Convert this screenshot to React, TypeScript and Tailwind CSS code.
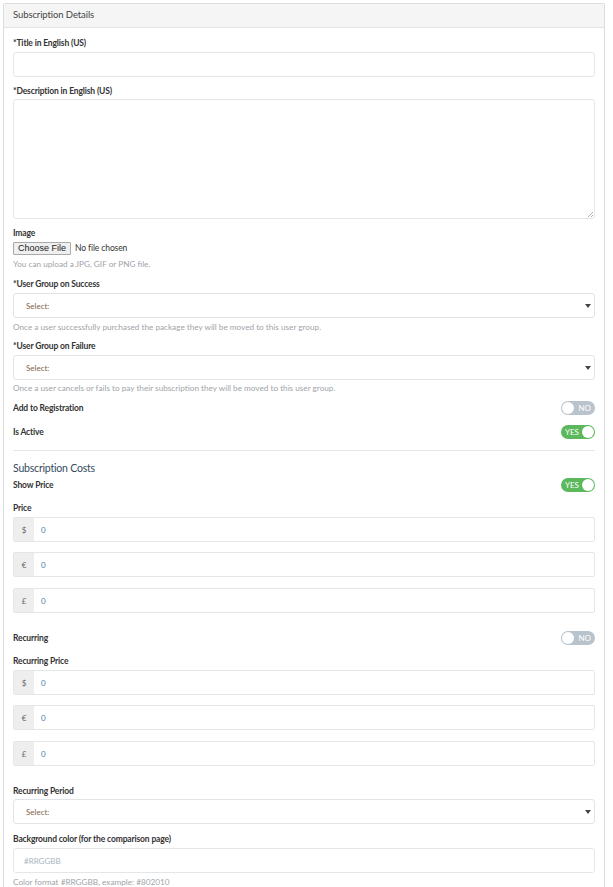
import React from 'react'

const font = { fontFamily: 'Lato, "Open Sans", sans-serif' }

function Label({ children, className = '' }: { children: React.ReactNode; className?: string }) {
  return <div className={`text-[8.5px] font-bold leading-[12px] tracking-[-0.15px] text-[#333] ${className}`}>{children}</div>
}

function Help({ children, className = '' }: { children: React.ReactNode; className?: string }) {
  return <div className={`text-[8.2px] leading-[11px] text-[#a0a4a8] ${className}`}>{children}</div>
}

function TextInput({ placeholder, className = '' }: { placeholder?: string; className?: string }) {
  return (
    <div className={`h-[25px] rounded-[3px] border border-[#e4e7ea] bg-white px-[10px] flex items-center ${className}`}>
      {placeholder && <span className="text-[8px] text-[#aab4bf]">{placeholder}</span>}
    </div>
  )
}

function SelectBox({ className = '' }: { className?: string }) {
  return (
    <div className={`h-[25px] rounded-[3px] border border-[#e0e4e8] bg-white pl-[12px] pr-[3px] flex items-center justify-between ${className}`}>
      <span className="text-[8px] text-[#7d6548]">Select:</span>
      <svg width="6" height="4" viewBox="0 0 6 4">
        <path d="M0 0 L6 0 L3 4 Z" fill="#444" />
      </svg>
    </div>
  )
}

function Toggle({ on }: { on: boolean }) {
  return on ? (
    <div className="w-[34px] h-[14px] rounded-full bg-[#5cb85c] flex items-center justify-between pl-[4px] pr-[1px]">
      <span className="text-[8px] leading-none text-white">YES</span>
      <span className="w-[12px] h-[12px] rounded-full bg-white" />
    </div>
  ) : (
    <div className="w-[34px] h-[14px] rounded-full bg-[#b9c3cc] flex items-center justify-between pl-[1px] pr-[4px]">
      <span className="w-[12px] h-[12px] rounded-full bg-white" />
      <span className="text-[8px] leading-none text-white">NO</span>
    </div>
  )
}

function MoneyInput({ sym, className = '' }: { sym: string; className?: string }) {
  return (
    <div className={`h-[25px] flex border border-[#e4e7ea] rounded-[2px] bg-white ${className}`}>
      <div className="w-[20px] bg-[#eeeeee] flex items-center justify-center text-[8px] text-[#666]">{sym}</div>
      <div className="flex-1 flex items-center pl-[7px] text-[8px] text-[#4b79a8]">0</div>
    </div>
  )
}

function SwitchRow({ label, on, className = '' }: { label: string; on: boolean; className?: string }) {
  return (
    <div className={`flex items-center justify-between h-[14px] ${className}`}>
      <Label>{label}</Label>
      <Toggle on={on} />
    </div>
  )
}

export default function App() {
  return (
    <div className="w-[613px] h-[887px] bg-white overflow-hidden" style={font}>
      <div className="ml-[3px] mt-[3px] w-[602px] border border-[#dddddd] border-b-0 rounded-t-[2px]">
        <div className="h-[24px] bg-[#f5f5f5] border-b border-[#e3e3e3] flex items-center px-[9px]">
          <span className="text-[9.5px] tracking-[-0.1px] text-[#444]">Subscription Details</span>
        </div>
        <div className="px-[9px] pt-[9px] pb-[20px]">
          <Label>*Title in English (US)</Label>
          <TextInput className="mt-[3px]" />

          <Label className="mt-[8px]">*Description in English (US)</Label>
          <div className="mt-[2px] h-[120px] rounded-[3px] border border-[#e4e7ea] bg-white relative">
            <svg className="absolute right-[1px] bottom-[1px]" width="6" height="6" viewBox="0 0 6 6">
              <path d="M6 1 L1 6 M6 4 L4 6" stroke="#999" strokeWidth="0.8" />
            </svg>
          </div>

          <Label className="mt-[8px]">Image</Label>
          <div className="mt-[3px] flex items-center h-[13px]">
            <div className="h-[13px] px-[4px] border border-[#a9a9a9] bg-[#efefef] rounded-[1px] text-[9px] leading-[11px] text-[#222]" style={{ fontFamily: '"Liberation Sans", Arial, sans-serif' }}>
              Choose File
            </div>
            <span className="ml-[4px] text-[8.5px] tracking-[-0.1px] text-[#333]">No file chosen</span>
          </div>
          <Help className="mt-[4px]">You can upload a JPG, GIF or PNG file.</Help>

          <Label className="mt-[8px]">*User Group on Success</Label>
          <SelectBox className="mt-[3px]" />
          <Help className="mt-[4px]">Once a user successfully purchased the package they will be moved to this user group.</Help>

          <Label className="mt-[7px]">*User Group on Failure</Label>
          <SelectBox className="mt-[3px]" />
          <Help className="mt-[3px]">Once a user cancels or fails to pay their subscription they will be moved to this user group.</Help>

          <SwitchRow className="mt-[7px]" label="Add to Registration" on={false} />
          <SwitchRow className="mt-[10px]" label="Is Active" on={true} />

          <div className="mt-[11px] border-t border-[#e6e6e6]" />

          <div className="mt-[10px] text-[10.5px] leading-[15px] tracking-[-0.2px] text-[#34495e]">Subscription Costs</div>
          <SwitchRow className="mt-[2px]" label="Show Price" on={true} />

          <Label className="mt-[10px]">Price</Label>
          <MoneyInput className="mt-[3px]" sym="$" />
          <MoneyInput className="mt-[10px]" sym="€" />
          <MoneyInput className="mt-[11px]" sym="£" />

          <SwitchRow className="mt-[18px]" label="Recurring" on={false} />

          <Label className="mt-[10px]">Recurring Price</Label>
          <MoneyInput className="mt-[3px]" sym="$" />
          <MoneyInput className="mt-[10px]" sym="€" />
          <MoneyInput className="mt-[11px]" sym="£" />

          <Label className="mt-[19px]">Recurring Period</Label>
          <SelectBox className="mt-[2px]" />

          <Label className="mt-[9px]">Background color (for the comparison page)</Label>
          <TextInput className="mt-[3px]" placeholder="#RRGGBB" />
          <Help className="mt-[4px]">Color format #RRGGBB, example: #802010</Help>
        </div>
      </div>
    </div>
  )
}
